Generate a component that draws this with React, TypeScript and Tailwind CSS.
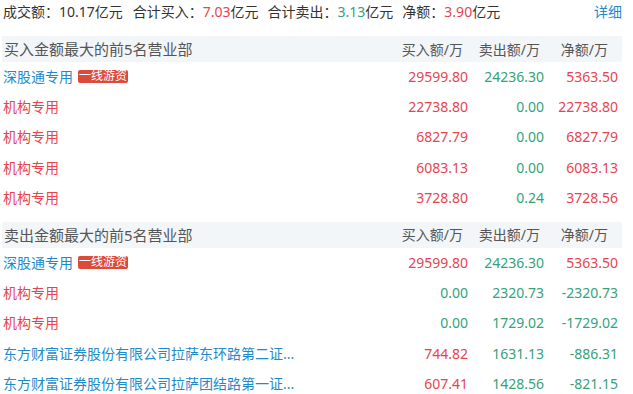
const red = "text-[#e6444f]";
const green = "text-[#35a27a]";
const blue = "text-[#1e8bcb]";

type Row = {
  name: string;
  kind: "blue" | "red";
  tag?: string;
  buy: string;
  sell: string;
  net: string;
};

const buyRows: Row[] = [
  { name: "深股通专用", kind: "blue", tag: "一线游资", buy: "29599.80", sell: "24236.30", net: "5363.50" },
  { name: "机构专用", kind: "red", buy: "22738.80", sell: "0.00", net: "22738.80" },
  { name: "机构专用", kind: "red", buy: "6827.79", sell: "0.00", net: "6827.79" },
  { name: "机构专用", kind: "red", buy: "6083.13", sell: "0.00", net: "6083.13" },
  { name: "机构专用", kind: "red", buy: "3728.80", sell: "0.24", net: "3728.56" },
];

const sellRows: Row[] = [
  { name: "深股通专用", kind: "blue", tag: "一线游资", buy: "29599.80", sell: "24236.30", net: "5363.50" },
  { name: "机构专用", kind: "red", buy: "0.00", sell: "2320.73", net: "-2320.73" },
  { name: "机构专用", kind: "red", buy: "0.00", sell: "1729.02", net: "-1729.02" },
  { name: "东方财富证券股份有限公司拉萨东环路第二证...", kind: "blue", buy: "744.82", sell: "1631.13", net: "-886.31" },
  { name: "东方财富证券股份有限公司拉萨团结路第一证...", kind: "blue", buy: "607.41", sell: "1428.56", net: "-821.15" },
];

function numColor(v: string, side: "buy" | "sell" | "net") {
  if (side === "buy") return v === "0.00" ? green : red;
  if (side === "sell") return green;
  return v.startsWith("-") ? green : red;
}

function Section({ title, rows, className }: { title: string; rows: Row[]; className?: string }) {
  return (
    <div className={className}>
      <div className="flex h-[26px] items-center bg-[#f3f6f9] text-[#555]">
        <div className="flex-1 pl-[2px] text-[15px]">{title}</div>
        <div className="w-[76px] pr-[5px] text-right text-[14px]">买入额/万</div>
        <div className="w-[76px] pr-[4px] text-right text-[14px]">卖出额/万</div>
        <div className="w-[78px] pr-[14px] text-right text-[14px]">净额/万</div>
      </div>
      {rows.map((r, i) => (
        <div key={i} className="flex h-[30.4px] items-center pb-[2px] text-[14px]">
          <div className="flex flex-1 items-center pl-[1px]">
            <span className={r.kind === "blue" ? blue : red}>{r.name}</span>
            {r.tag && (
              <span className="ml-[5px] flex h-[13px] items-center rounded-[2px] bg-[#db4a3a] px-[1px] text-[12px] leading-none text-white">
                {r.tag}
              </span>
            )}
          </div>
          <div className={`w-[76px] text-right ${numColor(r.buy, "buy")}`}>{r.buy}</div>
          <div className={`w-[76px] text-right ${numColor(r.sell, "sell")}`}>{r.sell}</div>
          <div className={`w-[78px] pr-[4px] text-right ${numColor(r.net, "net")}`}>{r.net}</div>
        </div>
      ))}
    </div>
  );
}

export default function App() {
  return (
    <div
      className="h-[394px] w-[633px] overflow-hidden bg-white"
      style={{ fontFamily: '"Noto Sans", "Noto Sans CJK SC", sans-serif' }}
    >
      <div className="ml-[2px] w-[620px]">
        <div className="flex h-[23px] items-center text-[14px] text-[#333]">
          <span className="mr-[10px] pl-[1px]">
            成交额：10.17亿元
          </span>
          <span className="mr-[9px]">
            合计买入：<span className={red}>7.03</span>亿元
          </span>
          <span className="mr-[9px]">
            合计卖出：<span className={green}>3.13</span>亿元
          </span>
          <span>
            净额：<span className={red}>3.90</span>亿元
          </span>
          <span className={`ml-auto ${blue}`}>详细</span>
        </div>
        <Section title="买入金额最大的前5名营业部" rows={buyRows} className="mt-[13px]" />
        <Section title="卖出金额最大的前5名营业部" rows={sellRows} className="mt-[8px]" />
      </div>
    </div>
  );
}
